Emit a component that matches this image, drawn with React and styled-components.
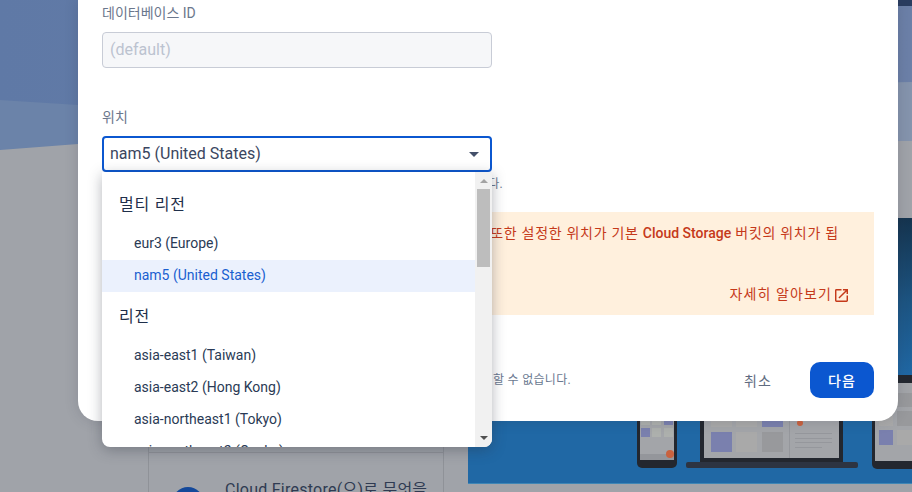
import styled, { createGlobalStyle } from 'styled-components'

const GlobalStyle = createGlobalStyle`
  html, body {
    margin: 0;
    padding: 0;
    background: #a0a3a9;
  }
  body {
    font-family: Roboto, "Noto Sans CJK KR", sans-serif;
  }
`

const multiRegions = [
  { name: 'eur3 (Europe)' },
  { name: 'nam5 (United States)', selected: true },
]
const regions = [
  { name: 'asia-east1 (Taiwan)' },
  { name: 'asia-east2 (Hong Kong)' },
  { name: 'asia-northeast1 (Tokyo)' },
  { name: 'asia-northeast2 (Osaka)' },
]

function Hero() {
  return (
    <HeroArt viewBox="0 0 912 218" preserveAspectRatio="none">
      <defs>
        <linearGradient id="heroBlue" x1="0" x2="1" y1="0" y2="0">
          <stop offset="0" stopColor="#5f79a6" />
          <stop offset="1" stopColor="#6c80a8" />
        </linearGradient>
      </defs>
      <rect width="912" height="218" fill="url(#heroBlue)" />
      <rect width="912" height="6" x="500" fill="#2a3d60" />
      <polygon points="0,100 78,105 912,82 912,218 0,218" fill="#6b83a9" />
      <polygon points="500,90 912,82 912,218 500,218" fill="#8594ad" />
      <polygon points="0,150 78,144 912,141 912,218 0,218" fill="#a0a3a9" />
    </HeroArt>
  )
}

function Devices() {
  return (
    <DevicesArt viewBox="0 0 444 265">
      {/* phone */}
      <rect x="169" y="100" width="40" height="150" rx="5" fill="#23272f" />
      <rect x="172" y="100" width="34" height="142" fill="#a3a5a9" />
      <rect x="172" y="236" width="34" height="6" fill="#94969b" />
      <rect x="173" y="192" width="9" height="15" fill="#adb0ad" />
      <rect x="184" y="192" width="9" height="15" fill="#adb0ad" />
      <rect x="196" y="192" width="9" height="15" fill="#7a80ae" />
      <rect x="173" y="210" width="9" height="9" fill="#7a80ae" />
      <rect x="184" y="210" width="9" height="9" fill="#adb0ad" />
      <rect x="196" y="210" width="9" height="9" fill="#adb0ad" />
      <circle cx="202" cy="236" r="4" fill="#c9623f" />
      {/* laptop */}
      <rect x="232" y="100" width="143" height="144" fill="#23272f" />
      <rect x="236" y="100" width="135" height="140" fill="#a3a5a9" />
      <rect x="218" y="244" width="172" height="6" rx="2" fill="#2d3442" />
      <rect x="321" y="100" width="1" height="140" fill="#95979c" />
      <rect x="243" y="214" width="21" height="20" fill="#7a80ae" />
      <rect x="268" y="214" width="21" height="20" fill="#a9a9a9" />
      <rect x="294" y="214" width="21" height="20" fill="#98999c" />
      <rect x="243" y="195" width="21" height="14" fill="#a9a9a9" />
      <rect x="268" y="195" width="21" height="14" fill="#a9a9a9" />
      <rect x="294" y="195" width="21" height="14" fill="#7a80ae" />
      <circle cx="332" cy="205" r="3" fill="#c9623f" />
      <rect x="327" y="215" width="37" height="1" fill="#95979c" />
      <rect x="327" y="220" width="37" height="1" fill="#95979c" />
      <rect x="327" y="224" width="37" height="1" fill="#95979c" />
      <rect x="327" y="229" width="27" height="1" fill="#95979c" />
      {/* tablet */}
      <path d="M427 157 v-27 q0 -8 -8 -8" fill="none" stroke="#5f93bd" strokeWidth="2" />
      <rect x="404" y="157" width="50" height="94" rx="5" fill="#23272f" />
      <rect x="407" y="165" width="47" height="78" fill="#a3a5a9" />
      <rect x="429" y="175" width="15" height="14" fill="#98999c" />
      <rect x="411" y="193" width="14" height="15" fill="#a9a9a9" />
      <rect x="429" y="193" width="15" height="15" fill="#98999c" />
      <rect x="411" y="212" width="14" height="15" fill="#7a80ae" />
      <rect x="429" y="212" width="15" height="15" fill="#a9a9a9" />
    </DevicesArt>
  )
}

function ExternalIcon() {
  return (
    <LinkIcon viewBox="3 3 18 18">
      <path d="M19 19H5V5h7V3H5a2 2 0 0 0-2 2v14a2 2 0 0 0 2 2h14c1.1 0 2-.9 2-2v-7h-2v7zM14 3v2h3.59l-9.83 9.83 1.41 1.41L19 6.41V10h2V3h-7z" fill="currentColor" />
    </LinkIcon>
  )
}

export default function App() {
  return (
    <Page>
      <GlobalStyle />
      <Hero />
      <Lower>
        <Cards>
          <CardTail />
          <Card>
            <CardIcon />
            <CardTitle>Cloud Firestore(으)로 무엇을</CardTitle>
          </Card>
        </Cards>
        <Gutter />
        <Promo>
          <Devices />
        </Promo>
      </Lower>

      <Modal>
        <Field>
          <Label>데이터베이스 ID</Label>
          <DisabledInput>(default)</DisabledInput>
        </Field>
        <LocationField>
          <Label>위치</Label>
          <SelectWrap>
            <Select>
              nam5 (United States)
              <Caret />
            </Select>
            <Dropdown>
              <GroupTitle>멀티 리전</GroupTitle>
              {multiRegions.map((r) => (
                <Option key={r.name} $selected={r.selected}>{r.name}</Option>
              ))}
              <GroupTitle $compact>리전</GroupTitle>
              {regions.map((r) => (
                <Option key={r.name}>{r.name}</Option>
              ))}
              <FakeScrollbar>
                <ArrowUp />
                <Thumb />
                <ArrowDown />
              </FakeScrollbar>
            </Dropdown>
          </SelectWrap>
          <Hint>위치 설정은 Cloud Firestore 데이터가 저장되는 위치입니다.</Hint>
        </LocationField>
        <Notice>
          <NoticeText>
            이 위치는 앱의 기본 데이터베이스의 저장 위치로 사용됩니다. 또한 설정한 위치가 기본 <b>Cloud Storage</b> 버킷의 위치가 됩니다.
          </NoticeText>
          <NoticeLink>
            자세히 알아보기
            <ExternalIcon />
          </NoticeLink>
        </Notice>
        <Footer>
          <FooterText>위치를 설정한 후에는 나중에 변경할 수 없습니다.</FooterText>
          <GhostButton>취소</GhostButton>
          <PrimaryButton>다음</PrimaryButton>
        </Footer>
      </Modal>
    </Page>
  )
}

const Page = styled.div`
  position: relative;
  width: 912px;
  height: 492px;
  overflow: hidden;
  display: flex;
  flex-direction: column;
  background: #a0a3a9;
`
const HeroArt = styled.svg`
  display: block;
  width: 912px;
  height: 218px;
  flex: none;
`
const Lower = styled.div`
  display: flex;
  height: 274px;
  padding-left: 148px;
`
const Cards = styled.div`
  width: 296px;
  flex: none;
  display: flex;
  flex-direction: column;
  border-left: 1px solid #8f9298;
  border-right: 1px solid #8f9298;
  box-sizing: border-box;
`
const CardTail = styled.div`
  height: 234px;
  flex: none;
  border-bottom: 1px solid #8f9298;
`
const Card = styled.div`
  display: flex;
  gap: 21px;
  padding: 27px 0 0 23px;
`
const CardIcon = styled.div`
  width: 32px;
  height: 32px;
  margin-top: 7px;
  flex: none;
  border-radius: 50%;
  background: #14489a;
`
const CardTitle = styled.div`
  font-size: 16px;
  line-height: 20px;
  letter-spacing: 0.25px;
  color: #2f3b52;
  white-space: nowrap;
`
const Gutter = styled.div`
  width: 24px;
  flex: none;
`
const Promo = styled.div`
  flex: 1;
  height: 265px;
  overflow: hidden;
  background: linear-gradient(180deg, #15344f 0, #1d5583 32%, #2068a5 60%, #2068a5 100%);
  border-bottom: 1px solid #3f86b5;
`
const DevicesArt = styled.svg`
  display: block;
  width: 444px;
  height: 265px;
`
const Modal = styled.div`
  position: absolute;
  left: 78px;
  top: 0;
  width: 820px;
  height: 421px;
  box-sizing: border-box;
  padding: 5px 24px 23px;
  display: flex;
  flex-direction: column;
  background: #fff;
  border-radius: 0 0 20px 20px;
  box-shadow: 0 0 14px rgba(40, 45, 60, 0.18);
`
const Field = styled.div`
  display: flex;
  flex-direction: column;
  gap: 10px;
`
const LocationField = styled(Field)`
  margin-top: 41px;
`
const Label = styled.div`
  font-size: 14px;
  line-height: 17px;
  color: #6b778c;
  white-space: nowrap;
`
const DisabledInput = styled.div`
  width: 390px;
  height: 36px;
  box-sizing: border-box;
  padding: 0 7px 2px;
  display: flex;
  align-items: center;
  font-size: 16px;
  color: #bcc3d0;
  background: #f6f7f9;
  border: 1px solid #c8ccd6;
  border-radius: 4px;
`
const SelectWrap = styled.div`
  position: relative;
  width: 390px;
`
const Select = styled.div`
  height: 36px;
  box-sizing: border-box;
  padding: 0 11px 2px 6px;
  display: flex;
  align-items: center;
  justify-content: space-between;
  font-size: 16px;
  color: #3a4660;
  background: #fff;
  border: 2px solid #0b57d0;
  border-radius: 4px;
`
const Caret = styled.span`
  width: 0;
  height: 0;
  margin-top: 2px;
  border-left: 5px solid transparent;
  border-right: 5px solid transparent;
  border-top: 5px solid #44506a;
`
const Dropdown = styled.div`
  position: absolute;
  left: 0;
  top: 36px;
  width: 390px;
  height: 275px;
  overflow: hidden;
  z-index: 2;
  background: #fff;
  border-radius: 0 0 8px 8px;
  box-shadow: 0 3px 14px rgba(40, 45, 60, 0.35);
`
const GroupTitle = styled.div`
  height: 24px;
  padding-left: 17px;
  margin-top: ${(p) => (p.$compact ? '13px' : '21px')};
  margin-bottom: 11px;
  font-size: 16px;
  line-height: 24px;
  letter-spacing: 0.8px;
  color: #1f2f4a;
`
const Option = styled.div`
  height: 32px;
  padding-left: 32px;
  font-size: 14px;
  line-height: 31px;
  white-space: nowrap;
  color: ${(p) => (p.$selected ? '#1a5fd0' : '#2a3a55')};
  background: ${(p) => (p.$selected ? '#ebf1fd' : 'transparent')};
`
const FakeScrollbar = styled.div`
  position: absolute;
  top: 0;
  right: 0;
  bottom: 0;
  width: 17px;
  background: #f1f1f1;
`
const Thumb = styled.div`
  position: absolute;
  left: 2px;
  top: 17px;
  width: 13px;
  height: 78px;
  background: #bdbdbd;
`
const ArrowUp = styled.span`
  position: absolute;
  left: 5px;
  top: 7px;
  width: 0;
  height: 0;
  border-left: 4px solid transparent;
  border-right: 4px solid transparent;
  border-bottom: 4px solid #a3a3a3;
`
const ArrowDown = styled.span`
  position: absolute;
  left: 5px;
  bottom: 7px;
  width: 0;
  height: 0;
  border-left: 4px solid transparent;
  border-right: 4px solid transparent;
  border-top: 4px solid #505050;
`
const Hint = styled.div`
  margin-top: -6px;
  width: 401px;
  text-align: right;
  font-size: 12px;
  line-height: 16px;
  letter-spacing: 0.3px;
  color: #6a7890;
  white-space: nowrap;
`
const Notice = styled.div`
  margin-top: 20px;
  height: 103px;
  box-sizing: border-box;
  padding: 11px 26px 11px 11px;
  display: flex;
  flex-direction: column;
  justify-content: space-between;
  background: #fff0dd;
  color: #c5391a;
`
const NoticeText = styled.div`
  font-size: 14px;
  line-height: 20px;
  letter-spacing: 0.7px;
  width: 732px;
  b {
    font-weight: 500;
    letter-spacing: 0;
  }
`
const NoticeLink = styled.div`
  align-self: flex-end;
  display: flex;
  align-items: center;
  gap: 3px;
  font-size: 14px;
  line-height: 20px;
  letter-spacing: 1.1px;
`
const LinkIcon = styled.svg`
  width: 13px;
  height: 13px;
  margin-top: 2px;
`
const Footer = styled.div`
  margin-top: auto;
  display: flex;
  align-items: center;
  height: 36px;
`
const FooterText = styled.div`
  flex: 1;
  padding-right: 155px;
  text-align: right;
  font-size: 12px;
  line-height: 16px;
  letter-spacing: 0.3px;
  color: #6a7890;
  white-space: nowrap;
`
const GhostButton = styled.div`
  width: 64px;
  margin-right: 20px;
  text-align: center;
  font-size: 14px;
  letter-spacing: 1px;
  color: #5f6b80;
`
const PrimaryButton = styled.div`
  width: 64px;
  height: 36px;
  display: flex;
  align-items: center;
  justify-content: center;
  font-size: 14px;
  font-weight: 500;
  letter-spacing: 1px;
  color: #fff;
  background: #0b57d0;
  border-radius: 10px;
`
